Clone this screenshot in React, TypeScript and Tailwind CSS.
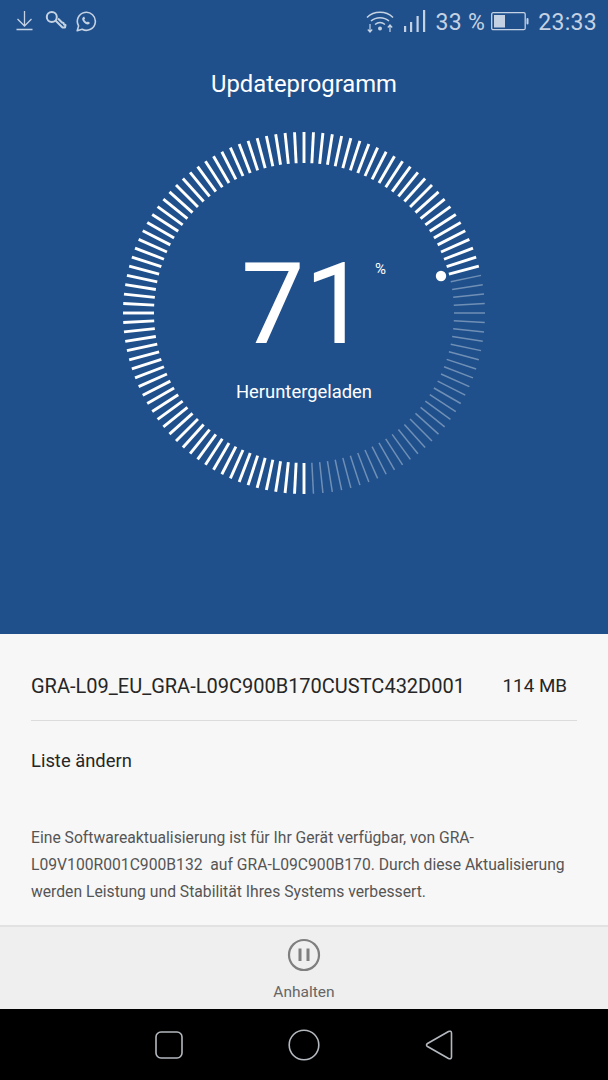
import * as React from "react";

const font = { fontFamily: "Roboto, sans-serif" };

function Gauge() {
  const ticks = [];
  for (let i = 0; i < 120; i++) {
    const bright = i <= 85;
    ticks.push(
      <line
        key={i}
        x1={181}
        y1={331}
        x2={181}
        y2={362}
        stroke="#ffffff"
        strokeOpacity={bright ? 1 : 0.36}
        strokeWidth={bright ? 2.9 : 1.5}
        transform={`rotate(${i * 3} 181 181)`}
      />
    );
  }
  return (
    <svg width="362" height="362" viewBox="0 0 362 362">
      {ticks}
      <circle cx="318" cy="144" r="5.2" fill="#ffffff" />
    </svg>
  );
}

function StatusBar() {
  return (
    <div className="flex h-[42px] items-center justify-between pl-[15px] pr-[11px] text-[#c5d2e3]">
      <div className="flex items-center gap-[10px]">
        <svg width="20" height="22" viewBox="0 0 20 22" fill="none" stroke="currentColor" strokeWidth="1.3">
          <path d="M9.5 1v14.5M2.5 9l7 7 7-7M1.5 19.5h16" />
        </svg>
        <svg width="22" height="22" viewBox="0 0 22 22" fill="none" stroke="currentColor" strokeWidth="2">
          <circle cx="6.800" cy="7" r="5" />
          <path d="M10.500 10.500l7 7h2.500l.5-2.500-1.500-.5-.5-1.500-1.500-.5-4-4" strokeLinejoin="round" />
        </svg>
        <svg width="21" height="21" viewBox="0 0 21 21" fill="none" stroke="currentColor" strokeWidth="1.6" className="-ml-[1px]">
          <path d="M1.2 19.8l1.4-4.9A9 9 0 1 1 6.200 18.300z" strokeLinejoin="round" />
          <path d="M7 6.200c-1.500 1.200-.8 3.400 1 5.300 1.900 1.900 4.100 2.700 5.400 1.200l.5-1-2-1.200-.9.800c-1-.4-2.200-1.500-2.700-2.800l.8-.9-1-2.100z" fill="currentColor" stroke="none" />
        </svg>
      </div>
      <div className="flex items-center text-[23px] leading-none" style={font}>
        <svg width="28" height="26" viewBox="0 0 28 26" fill="none" stroke="currentColor" strokeWidth="1.500">
          <path d="M1 9.500C8 2.500 20 2.500 27 9.500M5 13c5-4.500 13-4.500 18 0M9 16.500c3-2.500 7-2.500 10 0" />
          <circle cx="14" cy="20.500" r="2" fill="currentColor" stroke="none" />
          <path d="M4 16v8M1.800 21.500L4 24l2.200-2.500M24 24v-7M21.800 19.500L24 17l2.200 2.500" strokeWidth="1.200" />
        </svg>
        <svg width="22" height="24" viewBox="0 0 22 24" fill="currentColor" className="ml-[10px]">
          <rect x="0" y="17" width="2.200" height="6" />
          <rect x="6" y="13" width="2.200" height="10" />
          <rect x="12.500" y="7" width="2.200" height="16" />
          <rect x="19" y="1" width="2.200" height="22" />
        </svg>
        <span className="ml-[10px] translate-y-[1px] tracking-[0.3px]">33 %</span>
        <svg width="38" height="20" viewBox="0 0 38 20" fill="none" className="ml-[6px]">
          <rect x="0.700" y="1.700" width="33.500" height="17" rx="1.500" stroke="currentColor" strokeWidth="1.300" />
          <rect x="3" y="4" width="11" height="12.500" fill="currentColor" />
          <rect x="35.500" y="7" width="2" height="6.500" rx="1" fill="currentColor" />
        </svg>
        <span className="ml-[9px] translate-y-[1px] tracking-[0.3px]">23:33</span>
      </div>
    </div>
  );
}

export default function App() {
  return (
    <div className="flex h-[1080px] w-[608px] flex-col overflow-hidden bg-black" style={font}>
      <div className="h-[634px] bg-[#1f508c]">
        <StatusBar />
        <h1 className="mt-[27px] text-center text-[23.800px] leading-[30px] text-white">Updateprogramm</h1>
        <div className="relative mx-auto mt-[33px] h-[362px] w-[362px]">
          <Gauge />
          <div className="absolute left-[118px] top-[108px] text-[113px] font-normal leading-[130px] text-white">71</div>
          <div className="absolute left-[252px] top-[128px] text-[15px] leading-[18px] text-white">%</div>
          <div className="absolute inset-x-0 top-[249px] text-center text-[18.400px] leading-[22px] text-white">Heruntergeladen</div>
        </div>
      </div>
      <div className="h-[291px] bg-[#f7f7f7] px-[31px]">
        <div className="flex h-[87px] items-center justify-between border-b border-[#dcdcdc] pt-[18px] pr-[10px] text-[#262626]">
          <span className="text-[20px]">GRA-L09_EU_GRA-L09C900B170CUSTC432D001</span>
          <span className="text-[18.800px]">114 MB</span>
        </div>
        <div className="mt-[27px] text-[18.400px] leading-[26px] text-[#262626]">Liste ändern</div>
        <p className="mt-[50px] text-[15.700px] leading-[27px] text-[#555555]">
          Eine Softwareaktualisierung ist für Ihr Gerät verfügbar, von GRA-
          <br />
          L09V100R001C900B132&nbsp; auf GRA-L09C900B170. Durch diese Aktualisierung
          <br />
          werden Leistung und Stabilität Ihres Systems verbessert.
        </p>
      </div>
      <div className="flex h-[84px] flex-col items-center border-t-2 border-[#e2e2e2] bg-[#efefef]">
        <svg width="34" height="34" viewBox="0 0 34 34" fill="none" stroke="#7f7f7f" className="mt-[11px]">
          <circle cx="17" cy="17" r="15" strokeWidth="2.200" />
          <path d="M13 10.500v12.500M21 10.500v12.500" strokeWidth="3" />
        </svg>
        <span className="mt-[10px] text-[15.500px] leading-[20px] text-[#666666]">Anhalten</span>
      </div>
      <div className="flex h-[71px] items-center justify-between bg-black px-[155px]">
        <svg width="28" height="28" viewBox="0 0 28 28" fill="none" stroke="#b4b9bf" strokeWidth="1.600">
          <rect x="1" y="1" width="26" height="26" rx="5" />
        </svg>
        <svg width="32" height="32" viewBox="0 0 32 32" fill="none" stroke="#b4b9bf" strokeWidth="1.600">
          <circle cx="16" cy="16" r="14.800" />
        </svg>
        <svg width="28" height="30" viewBox="0 0 28 30" fill="none" stroke="#b4b9bf" strokeWidth="1.600">
          <path d="M23.500 1.500c1.500-.7 3-.2 3 1.500v24c0 1.700-1.500 2.200-3 1.500L2.500 16.500c-1.300-.8-1.300-2.200 0-3z" strokeLinejoin="round" />
        </svg>
      </div>
    </div>
  );
}
